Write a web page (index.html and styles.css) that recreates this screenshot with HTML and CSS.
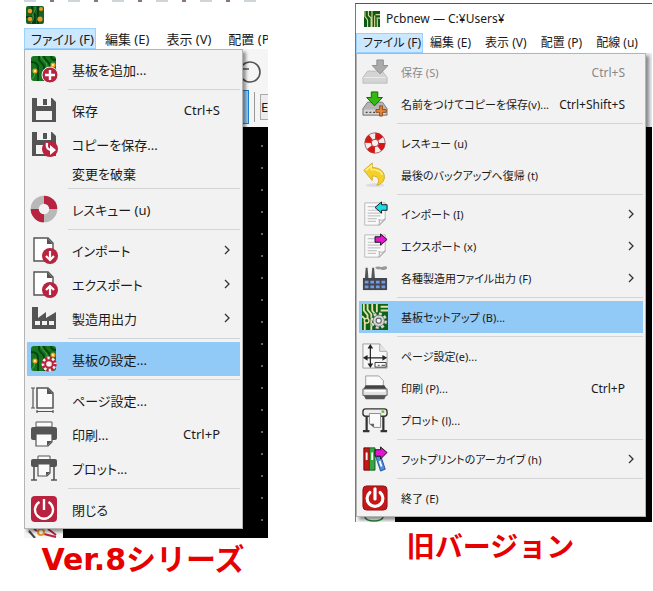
FILE: index.html
```
<!DOCTYPE html>
<html lang="ja">
<head>
    <meta charset="UTF-8">
    <meta name="viewport" content="width=device-width, initial-scale=1.0">
    <title>Pcbnew ファイルメニュー</title>
    <link rel="stylesheet" href="styles.css">
</head>
<body>
    <!-- shared icon parts -->
    <svg class="defs" width="0" height="0" aria-hidden="true">
        <symbol id="board" viewBox="0 0 28 28">
            <rect x="1" y="1" width="25" height="25" rx="3" fill="#15761f"/>
            <path d="M9 1v3c0 4 5 4 5 8v14M14 1c0 5 6 5 6 10v15M1 7c4 0 7 2 7 6v13M21 1c0 3 2 4 5 4" fill="none" stroke="#07470f" stroke-width="2"/>
            <path d="M11 1c0 4 6 5 6 10v5M5 15c0 5-1 8-4 9" fill="none" stroke="#3fae4c" stroke-width="1"/>
            <circle cx="5" cy="16" r="1.8" fill="#fff3c4" stroke="#eda01c" stroke-width="1.4"/>
            <circle cx="23" cy="10" r="1.8" fill="#fff3c4" stroke="#eda01c" stroke-width="1.4"/>
        </symbol>
        <symbol id="floppy" viewBox="0 0 28 28">
            <path d="M2 2h20l4 4v20H2z" fill="#545454"/>
            <path d="M7 2h14v8H7z" fill="#f4f4f4"/>
            <path d="M13 3h4v6h-4z" fill="#545454"/>
            <path d="M6 15h16v9H6z" fill="#f4f4f4"/>
        </symbol>
        <symbol id="sheet" viewBox="0 0 28 28">
            <path d="M4 2h14l5 5v18H4z" fill="#fff" stroke="#545454" stroke-width="1.4"/>
            <path d="M17 2l6 6h-6z" fill="#545454"/>
        </symbol>
        <symbol id="oldsheet" viewBox="0 0 28 28">
            <path d="M3 2h22v18l-6 6H3z" fill="#fafafa" stroke="#b5b5b5"/>
            <path d="M6 6h10M6 10h12M6 13h16M6 16h14M6 19h10M6 22h9" stroke="#c4c4c4" stroke-width="1.2"/>
            <path d="M18 26c1-3 1-4 0-6 3 1 5 1 7-1z" fill="#eee" stroke="#aaa"/>
        </symbol>
        <symbol id="arrow" viewBox="0 0 8 12">
            <path d="M2 2l4 4-4 4" fill="none" stroke="#333" stroke-width="1.3"/>
        </symbol>
    </svg>

    <main class="compare">
        <figure class="version version-new">
            <div class="strip"></div>
            <div class="window">
                <header class="titlebar">
                    <svg class="app-icon" viewBox="0 0 18 18">
                        <rect width="18" height="18" rx="2" fill="#17641f"/>
                        <path d="M6 0v5l3 4v9M12 0v18M0 11h5l2 3v4" fill="none" stroke="#0a3d10" stroke-width="2"/>
                        <path d="M9 1c1 5-3 5-2 9s-1 5-2 7" fill="none" stroke="#46a04c"/>
                        <circle cx="4" cy="5" r="2.3" fill="#e9962a"/><circle cx="15" cy="3" r="2" fill="#e9962a"/>
                        <circle cx="4" cy="13" r="2.3" fill="#e9962a"/><circle cx="14" cy="13" r="2.6" fill="#e9962a"/>
                    </svg>
                </header>
                <nav class="menubar">
                    <button class="open">ファイル (F)</button>
                    <button>編集 (E)</button>
                    <button>表示 (V)</button>
                    <button>配置 (P)</button>
                </nav>
                <div class="workspace">
                    <div class="backdrop">
                        <div class="toolbar">
                            <div class="tools">
                                <svg width="32" height="30" viewBox="0 0 32 30">
                                    <circle cx="14" cy="15" r="10" fill="none" stroke="#555" stroke-width="1.6"/>
                                    <path d="M5 4v8h8" fill="none" stroke="#555" stroke-width="1.6"/>
                                </svg>
                            </div>
                            <div class="tools">
                                <span class="tool-active"></span>
                                <span class="tool-line"></span>
                                <span class="tool-box">E</span>
                            </div>
                        </div>
                        <div class="editor">
                            <div class="sidebar">
                                <svg width="36" height="9" viewBox="0 0 36 9">
                                    <path d="M5 2l6 7" stroke="#444" stroke-width="2"/>
                                    <path d="M13 2l-3-2M20 5l12 3M24 0l8 6" stroke="#b8233f" stroke-width="2"/>
                                    <circle cx="17" cy="3" r="3" fill="#fff" stroke="#e9962a" stroke-width="2"/>
                                </svg>
                            </div>
                            <div class="canvas"></div>
                        </div>
                    </div>
                    <ul class="menu">
                        <li><button>
                            <svg class="icon" viewBox="0 0 28 28"><use href="#board"/><circle cx="20" cy="20" r="8" fill="#b8233f" stroke="#f2f2f2"/><path d="M20 15v10M15 20h10" stroke="#fff" stroke-width="2.4"/></svg>
                            <span class="label">基板を追加...</span></button></li>
                        <li class="separator"></li>
                        <li><button>
                            <svg class="icon" viewBox="0 0 28 28"><use href="#floppy"/></svg>
                            <span class="label">保存</span><span class="shortcut">Ctrl+S</span></button></li>
                        <li><button>
                            <svg class="icon" viewBox="0 0 28 28"><use href="#floppy"/><circle cx="20" cy="19" r="8" fill="#b8233f"/><path d="M17 13c-1 5 1 7 5 7" fill="none" stroke="#fff" stroke-width="2.4"/><path d="M20 15l6 5-6 5z" fill="#fff"/></svg>
                            <span class="label">コピーを保存...</span></button></li>
                        <li><button class="no-icon"><span class="icon"></span><span class="label">変更を破棄</span></button></li>
                        <li class="separator"></li>
                        <li><button>
                            <svg class="icon" viewBox="0 0 28 28"><circle cx="14" cy="14" r="9.3" fill="none" stroke="#b8b8b8" stroke-width="8"/><path d="M14 4.700a9.300 9.300 0 0 1 9.300 9.300M14 23.300a9.300 9.300 0 0 1-9.300-9.300" fill="none" stroke="#b8233f" stroke-width="8"/></svg>
                            <span class="label">レスキュー (u)</span></button></li>
                        <li class="separator"></li>
                        <li><button>
                            <svg class="icon" viewBox="0 0 28 28"><use href="#sheet"/><circle cx="20" cy="20" r="8" fill="#b8233f"/><path d="M20 15v9M16 20l4 4 4-4" fill="none" stroke="#fff" stroke-width="2.2"/></svg>
                            <span class="label">インポート</span><svg class="arrow"><use href="#arrow"/></svg></button></li>
                        <li><button>
                            <svg class="icon" viewBox="0 0 28 28"><use href="#sheet"/><circle cx="20" cy="20" r="8" fill="#b8233f"/><path d="M20 25v-9M16 20l4-4 4 4" fill="none" stroke="#fff" stroke-width="2.2"/></svg>
                            <span class="label">エクスポート</span><svg class="arrow"><use href="#arrow"/></svg></button></li>
                        <li><button>
                            <svg class="icon" viewBox="0 0 28 28"><path d="M2 3h6v11l8-6v6l10-6v17H2z" fill="#545454"/><path d="M5 17h5v4H5zM12 17h5v4h-5zM19 17h5v4h-5z" fill="#f2f2f2"/></svg>
                            <span class="label">製造用出力</span><svg class="arrow"><use href="#arrow"/></svg></button></li>
                        <li class="separator"></li>
                        <li><button class="selected">
                            <svg class="icon" viewBox="0 0 28 28"><use href="#board"/><circle cx="19" cy="19" r="7.500" fill="#f2f2f2"/><circle cx="19" cy="19" r="6" fill="none" stroke="#b8233f" stroke-width="3.400" stroke-dasharray="2.400 2.312"/><circle cx="19" cy="19" r="3.800" fill="#f2f2f2" stroke="#b8233f" stroke-width="2"/></svg>
                            <span class="label">基板の設定...</span></button></li>
                        <li class="separator"></li>
                        <li><button>
                            <svg class="icon" viewBox="0 0 28 28"><path d="M7 2h11l5 5v15H7z" fill="#fafafa" stroke="#545454" stroke-width="1.500"/><path d="M17 2l6 6h-6z" fill="#545454"/><path d="M3 2v20M1 2h4M1 22h4M7 25.500h16M7 24v3M23 24v3" stroke="#545454" stroke-width="1.200"/></svg>
                            <span class="label">ページ設定...</span></button></li>
                        <li><button>
                            <svg class="icon" viewBox="0 0 28 28"><path d="M6 2h16v5H6z" fill="#fafafa" stroke="#545454"/><rect x="1" y="7" width="26" height="13" rx="2" fill="#545454"/><path d="M6 14h16v8l-4 4H6z" fill="#fafafa" stroke="#545454" stroke-width="1.200"/><path d="M17 26v-5h5z" fill="#545454"/></svg>
                            <span class="label">印刷...</span><span class="shortcut">Ctrl+P</span></button></li>
                        <li><button>
                            <svg class="icon" viewBox="0 0 28 28"><path d="M8 2h12v4H8z" fill="#fafafa" stroke="#545454"/><rect x="1" y="5" width="26" height="8" rx="2" fill="#545454"/><path d="M4 13v13M24 13v13M1 26h6M21 26h6" stroke="#545454" stroke-width="1.600"/><path d="M8 10h12v9l-3 3H8z" fill="#fafafa" stroke="#545454" stroke-width="1.200"/><path d="M16 22v-4h4z" fill="#545454"/></svg>
                            <span class="label">プロット...</span></button></li>
                        <li class="separator"></li>
                        <li><button>
                            <svg class="icon" viewBox="0 0 28 28"><rect x="1" y="1" width="26" height="26" rx="4" fill="#b8233f"/><path d="M9.500 7a9 9 0 1 0 9 0M14 4v11" fill="none" stroke="#fff" stroke-width="2.400"/></svg>
                            <span class="label">閉じる</span></button></li>
                    </ul>
                </div>
            </div>
            <figcaption>Ver.8シリーズ</figcaption>
        </figure>

        <figure class="version version-old">
            <div class="window">
                <header class="titlebar">
                    <svg class="app-icon" viewBox="0 0 18 18">
                        <rect width="18" height="18" fill="#0b5a12"/>
                        <path d="M1 0v6l3 4v8M5 0v5l3 3v10M9 0v18M12 5v13M15 9v9M13 4h5M14 8h4" fill="none" stroke="#d9d69a" stroke-width="1.300"/>
                    </svg>
                    <span>Pcbnew — C:¥Users¥</span>
                </header>
                <nav class="menubar">
                    <button class="open">ファイル (F)</button>
                    <button>編集 (E)</button>
                    <button>表示 (V)</button>
                    <button>配置 (P)</button>
                    <button>配線 (u)</button>
                </nav>
                <div class="workspace">
                    <div class="backdrop">
                        <div class="toolbar"></div>
                        <div class="editor">
                            <div class="sidebar">
                                <svg width="36" height="5" viewBox="0 0 36 5"><ellipse cx="18" cy="0" rx="9" ry="4" fill="none" stroke="#28833a" stroke-width="1.500"/></svg>
                            </div>
                            <div class="canvas"></div>
                        </div>
                    </div>
                    <ul class="menu">
                        <li><button disabled>
                            <svg class="icon" viewBox="0 0 28 28"><path d="M6 13h16l5 7v6H1v-6z" fill="#d4d4d4" stroke="#bbb"/><path d="M2 20h24" stroke="#eee"/><path d="M16 1h7v6h5l-8.500 9L11 7h5z" fill="#aaa" stroke="#8d8d8d"/></svg>
                            <span class="label">保存 (S)</span><span class="shortcut">Ctrl+S</span></button></li>
                        <li><button>
                            <svg class="icon" viewBox="0 0 28 28"><path d="M6 12h16l5 7v7H1v-7z" fill="#b5b5b5" stroke="#777"/><path d="M2 20h24v5H2z" fill="#d5d5d5"/><path d="M4 23h2M8 23h2M12 23h2" stroke="#444" stroke-width="1.500"/><path d="M10 1h7v6h5l-8.500 9L5 7h5z" fill="#35b812" stroke="#145c08"/><path d="M19 16h3v4h4v3h-4v4h-3v-4h-4v-3h4z" fill="#e8843a" stroke="#8c4713"/></svg>
                            <span class="label">名前をつけてコピーを保存(v)...</span><span class="shortcut">Ctrl+Shift+S</span></button></li>
                        <li class="separator"></li>
                        <li><button>
                            <svg class="icon" viewBox="0 0 28 28"><circle cx="14" cy="14" r="7.500" fill="none" stroke="#eee" stroke-width="7"/><circle cx="14" cy="14" r="7.500" fill="none" stroke="#d91616" stroke-width="7" stroke-dasharray="6.781 5"/><circle cx="14" cy="14" r="11" fill="none" stroke="#9a4040" stroke-width=".8"/><circle cx="14" cy="14" r="4" fill="#f2f2f2" stroke="#a33"/></svg>
                            <span class="label">レスキュー (u)</span></button></li>
                        <li><button>
                            <svg class="icon" viewBox="0 0 28 28"><ellipse cx="14" cy="25" rx="10" ry="2" fill="#ddd"/><path d="M2 9l9-8v5c9 0 14 5 13 12-1 4-4 6-8 7 3-4 3-10-5-10v5z" fill="#f5d02a" stroke="#d1aa1c"/><path d="M4 9l6-5v4c7 0 11 3 12 6" fill="none" stroke="#fff09a" stroke-width="1.500"/></svg>
                            <span class="label">最後のバックアップへ復帰 (t)</span></button></li>
                        <li class="separator"></li>
                        <li><button>
                            <svg class="icon" viewBox="0 0 28 28"><use href="#oldsheet"/><path d="M14 7l7-6v3h6v6h-6v3z" fill="#19dbe6" stroke="#111"/></svg>
                            <span class="label">インポート (I)</span><svg class="arrow"><use href="#arrow"/></svg></button></li>
                        <li><button>
                            <svg class="icon" viewBox="0 0 28 28"><use href="#oldsheet"/><path d="M27 7l-7-6v3h-6v6h6v3z" fill="#e414d2" stroke="#111"/></svg>
                            <span class="label">エクスポート (x)</span><svg class="arrow"><use href="#arrow"/></svg></button></li>
                        <li><button>
                            <svg class="icon" viewBox="0 0 28 28"><path d="M3 15L4 3h2l1 12zM10 15l1-12h2l1 12z" fill="#555"/><path d="M14 3c3-3 6 0 8-1s5-1 5 1-3 3-6 2-4 1-7-2z" fill="#999"/><path d="M1 14h26v13H1z" fill="#44474d"/><path d="M3 17h4v3H3zM9 17h4v3H9zM15 17h4v3h-4zM21 17h4v3h-4zM3 22h4v3H3zM9 22h4v3H9zM15 22h4v3h-4zM21 22h4v3h-4z" fill="#6f9be8"/></svg>
                            <span class="label">各種製造用ファイル出力 (F)</span><svg class="arrow"><use href="#arrow"/></svg></button></li>
                        <li class="separator"></li>
                        <li><button class="selected">
                            <svg class="icon" viewBox="0 0 28 28"><rect width="28" height="28" fill="#0b6414"/><path d="M2 0v7l4 5v5M6 0v6l4 5v4M11 0v7l3 4M16 0v9M20 3h8M20 7h8M10 17v11M0 13l3 3v12" fill="none" stroke="#e4dfaa" stroke-width="2"/><circle cx="5" cy="18" r="2.500" fill="#0b6414" stroke="#e4dfaa" stroke-width="1.500"/><circle cx="18" cy="18" r="7.500" fill="none" stroke="#777" stroke-width="3.600" stroke-dasharray="3.200 2.690"/><circle cx="18" cy="18" r="7.500" fill="none" stroke="#ddd" stroke-width="2.400" stroke-dasharray="3 2.890"/><circle cx="18" cy="18" r="6" fill="#d8d8d8" stroke="#888"/><circle cx="18" cy="18" r="2.800" fill="#f4f4f4" stroke="#666" stroke-width="1.200"/></svg>
                            <span class="label">基板セットアップ (B)...</span></button></li>
                        <li class="separator"></li>
                        <li><button>
                            <svg class="icon" viewBox="0 0 28 28"><path d="M1 1h18l8 9v17H1z" fill="#f7f7f7" stroke="#999"/><path d="M19 1v8h8" fill="#e4e4e4" stroke="#aaa"/><path d="M9 4v20M4 16h20" stroke="#222" stroke-width="1.300"/><path d="M9 1l3 5H6zM9 27l3-5H6zM1 16l5-3v6zM27 16l-5-3v6z" fill="#222"/><path d="M14 21h12v5H14zM17 24h2M21 24h4" fill="#fff" stroke="#333"/></svg>
                            <span class="label">ページ設定(e)...</span></button></li>
                        <li><button>
                            <svg class="icon" viewBox="0 0 28 28"><path d="M4 14V1h14l5 5v8z" fill="#fafafa" stroke="#999"/><path d="M4 11h20l3 5v6H1v-6z" fill="#444"/><path d="M1 15h26v7H1z" fill="#e2e2e2" stroke="#666"/><path d="M3 17h22" stroke="#fff" stroke-width="2"/><path d="M2 22h24l-2 4H4z" fill="#555"/></svg>
                            <span class="label">印刷 (P)...</span><span class="shortcut">Ctrl+P</span></button></li>
                        <li><button>
                            <svg class="icon" viewBox="0 0 28 28"><path d="M5 8v18M23 8v18M1 26h7M20 26h7" stroke="#333" stroke-width="2.400"/><rect x="1" y="2" width="26" height="8" rx="3" fill="#eee" stroke="#333" stroke-width="1.500"/><path d="M8 7h12v15h-7l-5-4z" fill="#fafafa" stroke="#888"/><path d="M8 18h5v4z" fill="#666"/><path d="M21 5h3" stroke="#54c51e" stroke-width="2.500"/></svg>
                            <span class="label">プロット (l)...</span></button></li>
                        <li class="separator"></li>
                        <li><button>
                            <svg class="icon" viewBox="0 0 28 28"><path d="M2 2h6v24H2z" fill="#c41919" stroke="#700"/><path d="M8 2h6v24H8z" fill="#32a840" stroke="#165b1e"/><path d="M15 12l5-2 5 15-5 2z" fill="#4b8fe4" stroke="#234f91"/><path d="M5 7v8M11 7v8M19 16l2 6" stroke="#fff" stroke-width="2"/><path d="M14 4h6V1l7 6-7 7v-3h-6z" fill="#e414d2" stroke="#111"/></svg>
                            <span class="label">フットプリントのアーカイブ (h)</span><svg class="arrow"><use href="#arrow"/></svg></button></li>
                        <li class="separator"></li>
                        <li><button>
                            <svg class="icon" viewBox="0 0 28 28"><rect x="1" y="1" width="26" height="26" rx="4" fill="#c3171a" stroke="#8f0d10"/><path d="M8.500 8a8.500 8.500 0 1 0 11 0M14 4v11" fill="none" stroke="#fff" stroke-width="3.400" stroke-linecap="round"/></svg>
                            <span class="label">終了 (E)</span></button></li>
                    </ul>
                </div>
            </div>
            <figcaption>旧バージョン</figcaption>
        </figure>
    </main>
</body>
</html>
```
FILE: styles.css
```
* {
    margin: 0;
    padding: 0;
    box-sizing: border-box;
}

body {
    background: #fff;
    color: #1a1a1a;
    font-family: "Noto Sans", "Noto Sans CJK JP", sans-serif;
    font-feature-settings: "palt";
}

button {
    border: none;
    background: none;
    color: inherit;
    font: inherit;
    font-feature-settings: inherit;
    white-space: nowrap;
}

.defs {
    position: absolute;
}

.compare {
    display: grid;
    grid-template-columns: 244fr 297fr;
    gap: 87px;
    align-items: start;
    padding: 0 1px 0 24px;
}

.version {
    min-width: 0;
}

.version-new {
    font-size: 13px;
}

.version-old {
    font-size: 12px;
    padding-top: 3px;
}

.strip {
    height: 2px;
    background: repeating-linear-gradient(90deg, #cfd6da 0 12px, #fff 12px 26px, #8a7480 26px 30px, #fff 30px 44px);
}

.window {
    overflow: hidden;
}

.version-old .window {
    border-top: 1px solid #555;
    border-left: 1px solid #777;
}

.titlebar {
    display: flex;
    align-items: center;
    gap: 6px;
    height: 26px;
    padding-left: 2px;
}

.version-old .titlebar {
    height: 29px;
    padding-left: 8px;
}

.app-icon {
    width: 18px;
    height: 18px;
}

.version-old .app-icon {
    width: 16px;
    height: 16px;
}

/* Menu bar */
.menubar {
    display: flex;
    gap: 1px;
    height: 21px;
    overflow: hidden;
}

.version-old .menubar {
    gap: 0;
    height: 20px;
}

.menubar button {
    flex: none;
    padding: 0 8px;
    line-height: 18px;
}

.version-old .menubar button {
    padding: 0 7px;
}

.menubar .open,
.version-old .menubar .open {
    background: #cce8ff;
    border: 1px solid #99d1ff;
    padding: 0 1px 0 6px;
}

/* The open menu lies over the editor in the same grid cell */
.workspace {
    display: grid;
}

.backdrop,
.menu {
    grid-area: 1 / 1;
    min-width: 0;
}

.backdrop {
    display: flex;
    flex-direction: column;
}

.toolbar {
    height: 78px;
    padding-top: 5px;
    background: #f5f5f5;
}

.version-old .toolbar {
    height: 74px;
    background: #e6e9ed;
}

.tools {
    display: flex;
    justify-content: flex-end;
    align-items: center;
    height: 35px;
}

.tool-active {
    width: 20px;
    height: 34px;
    background: #99cdf5;
    border: 1px solid #1a7fd4;
}

.tool-line {
    width: 1px;
    height: 30px;
    margin: 0 5px;
    background: #999;
}

.tool-box {
    width: 8px;
    height: 26px;
    border: 1px solid #aaa;
    border-right: none;
    background: #ececec;
    line-height: 24px;
    overflow: hidden;
}

.editor {
    display: flex;
    flex: 1;
}

.sidebar {
    display: flex;
    align-items: flex-end;
    width: 39px;
    background: #f5f5f5;
}

.canvas {
    flex: 1;
    background: #000 radial-gradient(circle, #666 1px, transparent 1px) right 0 top 8px / 12px 22px repeat-y;
}

.version-old .canvas {
    background: #000;
}

/* Drop-down menu */
.menu {
    margin: 0 25px 9px 0;
    padding: 2px;
    border: 1px solid #b4b4b4;
    background: #f2f2f2;
    box-shadow: 3px 3px 3px rgba(0,0,0,0.4);
    list-style: none;
    z-index: 1;
}

.version-old .menu {
    margin: 0 6px 5px 0;
}

.menu button {
    display: flex;
    align-items: center;
    width: 100%;
    height: 34px;
    padding: 0 20px 0 3px;
    text-align: left;
}

.version-old .menu button {
    height: 32px;
    padding-right: 18px;
}

.menu .no-icon {
    height: 24px;
}

.menu .selected {
    background: #91c9f7;
}

.menu button:disabled {
    color: #888;
}

.separator {
    height: 7px;
    padding: 3px 0;
    margin-left: 41px;
    background: #d4d4d4 content-box;
}

.version-old .separator {
    margin-left: 38px;
}

.icon {
    flex: none;
    width: 28px;
    height: 28px;
    margin-right: 14px;
}

.version-old .icon {
    width: 26px;
    height: 26px;
    margin-right: 13px;
}

.label {
    flex: 1;
}

.version-old .label {
    font-size: 11px;
}

.arrow {
    width: 8px;
    height: 12px;
    margin-right: -11px;
}

.version-old .arrow {
    margin-right: -10px;
}

figcaption {
    padding-right: 6px;
    color: #e60000;
    font-family: "DejaVu Sans", "Noto Sans CJK JP", sans-serif;
    font-size: 30px;
    font-weight: bold;
    font-feature-settings: normal;
    line-height: 44px;
    text-align: center;
    white-space: nowrap;
}

.version-old figcaption {
    padding: 4px 26px 0 0;
    font-size: 28px;
}
```
